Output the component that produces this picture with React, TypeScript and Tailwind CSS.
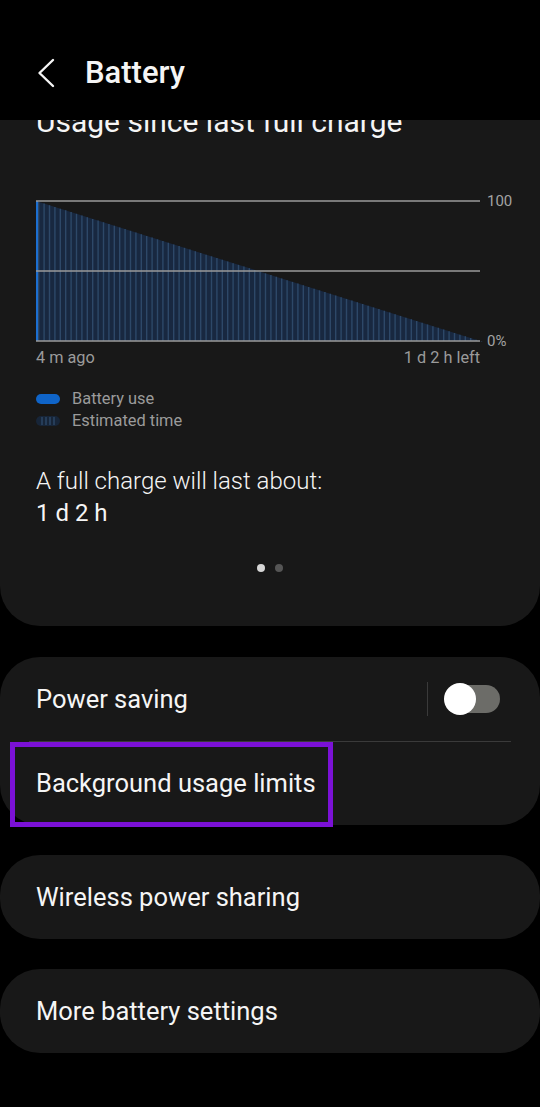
import React from "react"

const STRIPES = Array.from({ length: 83 }, (_, i) => i * 5.4 + 2.7)

function Chart() {
  return (
    <svg width="480" height="152" viewBox="0 0 480 152" className="overflow-visible">
      <polygon points="0,6 444,146 0,146" fill="#182840" />
      {STRIPES.map((x) => (
        <line
          key={x}
          x1={x}
          x2={x}
          y1={6 + (140 * x) / 444}
          y2={146}
          stroke="#2d4868"
          strokeWidth="1.4"
        />
      ))}
      <line x1="1" x2="1" y1="6" y2="146" stroke="#1c6fd1" strokeWidth="2" />
      <line x1="0" x2="444" y1="6" y2="6" stroke="#9a9a9a" strokeWidth="1.5" />
      <line x1="0" x2="444" y1="76" y2="76" stroke="#9a9a9a" strokeWidth="1.5" />
      <line x1="0" x2="444" y1="146" y2="146" stroke="#9a9a9a" strokeWidth="1.5" />
      <text x="451" y="11" fill="#a3a3a3" fontSize="15" fontFamily="Roboto, sans-serif">
        100
      </text>
      <text x="451" y="151" fill="#a3a3a3" fontSize="15" fontFamily="Roboto, sans-serif">
        0%
      </text>
    </svg>
  )
}

function StripedPill() {
  return (
    <svg width="24" height="10" viewBox="0 0 24 10">
      <rect x="0" y="0" width="24" height="10" rx="5" fill="#172538" />
      {[6, 10, 14, 18].map((x) => (
        <line key={x} x1={x} x2={x} y1="1" y2="9" stroke="#2d4868" strokeWidth="1.4" />
      ))}
    </svg>
  )
}

function Toggle() {
  return (
    <div className="flex items-center">
      <div className="h-[34px] w-px bg-[#3a3a3a]" />
      <div className="ml-[18px] relative h-[28px] w-[54px] rounded-full bg-[#6c6c68] flex items-center">
        <div className="h-[32px] w-[32px] -ml-[2px] rounded-full bg-white" />
      </div>
    </div>
  )
}

export default function App() {
  return (
    <div className="relative w-[540px] h-[1107px] overflow-hidden bg-black text-[#f5f5f5] font-['Roboto',sans-serif]">
      {/* ================= HEADER ================= */}
      <header className="absolute top-0 inset-x-0 z-10 h-[120px] bg-black flex items-center pl-[37px] pt-[26px]">
        <svg width="20" height="30" viewBox="0 0 20 30" fill="none">
          <path d="M16 2 L2.5 15 L16 28" stroke="#f5f5f5" strokeWidth="2.4" strokeLinecap="round" strokeLinejoin="round" />
        </svg>
        <h1 className="ml-[28px] text-[31px] leading-[36px] font-medium">Battery</h1>
      </header>

      {/* ================= USAGE CARD ================= */}
      <section className="bg-[#181818] rounded-b-[40px] pt-[104px] pb-[54px] px-[36px]">
        <h2 className="text-[30px] leading-[36px]">Usage since last full charge</h2>

        <div className="mt-[55px]">
          <Chart />
        </div>

        <div className="mt-[1px] w-[444px] flex justify-between text-[16.3px] leading-[20px] text-[#9b9b9b]">
          <span>4 m ago</span>
          <span>1 d 2 h left</span>
        </div>

        <div className="mt-[20px] flex flex-col text-[16.4px] leading-[22px] text-[#9b9b9b]">
          <div className="flex items-center gap-[12px]">
            <span className="h-[10px] w-[24px] rounded-full bg-[#0f64c8]" />
            <span>Battery use</span>
          </div>
          <div className="flex items-center gap-[12px]">
            <StripedPill />
            <span>Estimated time</span>
          </div>
        </div>

        <p className="mt-[33px] text-[24px] leading-[32px] font-light">A full charge will last about:</p>
        <p className="text-[24px] leading-[32px]">1 d 2 h</p>

        <div className="mt-[35px] flex justify-center gap-[10px]">
          <span className="h-[8px] w-[8px] rounded-full bg-[#d6d6d6]" />
          <span className="h-[8px] w-[8px] rounded-full bg-[#555555]" />
        </div>
      </section>

      {/* ================= SETTINGS ================= */}
      <div className="mt-[31px] flex flex-col gap-[30px]">
        <div className="bg-[#181818] rounded-[40px]">
          <div className="h-[84px] flex items-center justify-between pl-[36px] pr-[40px]">
            <span className="text-[25.5px]">Power saving</span>
            <Toggle />
          </div>
          <div className="mx-[29px] h-px bg-[#3a3a3a]" />
          <div className="relative h-[83px] flex items-center pl-[36px]">
            <span className="text-[25.5px]">Background usage limits</span>
            <div className="absolute left-[10px] top-0 h-[85px] w-[323px] border-[5px] border-[#7b11d6]" />
          </div>
        </div>

        <div className="bg-[#181818] rounded-[40px] h-[84px] flex items-center pl-[36px]">
          <span className="text-[25.5px]">Wireless power sharing</span>
        </div>

        <div className="bg-[#181818] rounded-[40px] h-[84px] flex items-center pl-[36px]">
          <span className="text-[25.5px]">More battery settings</span>
        </div>
      </div>
    </div>
  )
}
